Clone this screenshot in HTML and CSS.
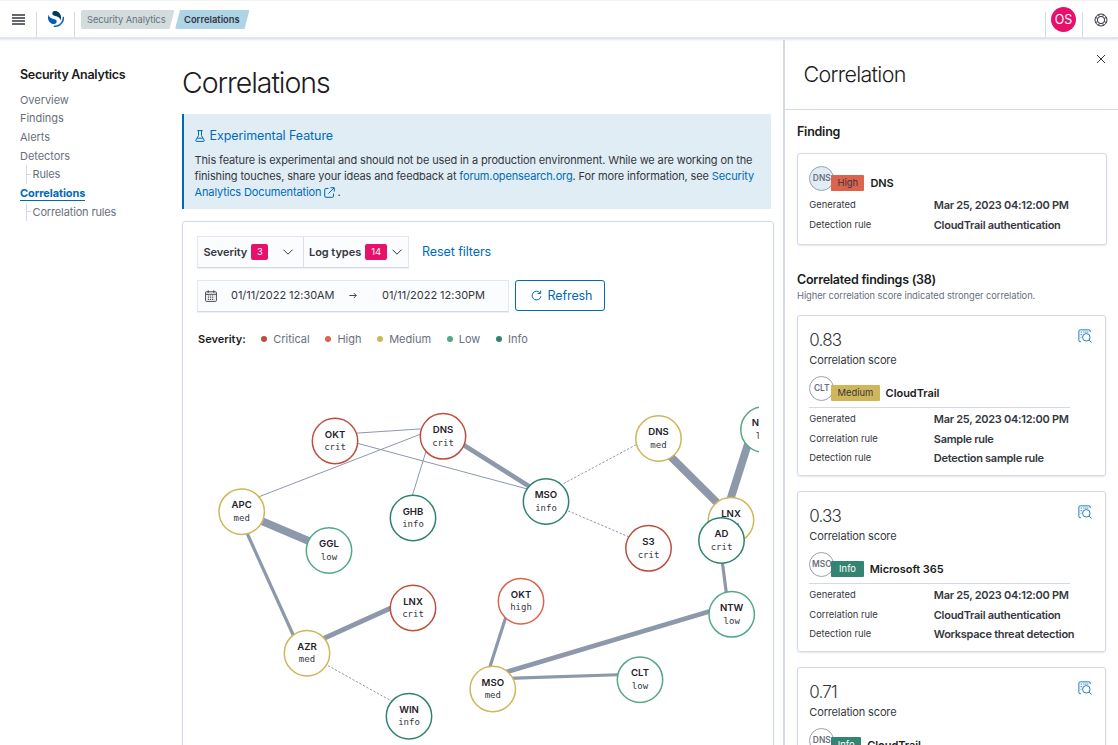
FILE: index.html
```html
<!DOCTYPE html>
<html lang="en">
<head>
<meta charset="utf-8">
<title>Correlations</title>
<link rel="stylesheet" href="styles.css">
</head>
<body>
<svg class="defs" aria-hidden="true">
  <symbol id="inspect" viewBox="0 0 16 16">
    <path d="M3.5 14.5h-1a1.5 1.5 0 0 1-1.5-1.500V2.500A1.500 1.500 0 0 1 2.500 1h10A1.500 1.500 0 0 1 14 2.500v1" />
    <path d="M3 3.500h1.500M6 3.500h6M3 6.500h2.500M3 9.500h1" stroke-dasharray="1.500 .7" />
    <circle cx="9.500" cy="9.500" r="4.300" />
    <path d="M12.700 12.700l2.800 2.800" />
  </symbol>
  <symbol id="chevron" viewBox="0 0 12 12"><path d="M1.500 3.700L6 8.200l4.500-4.500" /></symbol>
</svg>

<header class="topbar">
  <div class="menu"><svg width="13" height="11" viewBox="0 0 13 11"><path d="M0 1h13M0 4h13M0 7h13M0 10h13" /></svg></div>
  <div class="logo">
    <svg width="16" height="16" viewBox="0 0 64 64">
      <path fill="#005eb8" d="M61.700 23.500a2.300 2.300 0 0 0-2.300 2.300c0 18.600-15 33.600-33.600 33.600a2.300 2.300 0 1 0 0 4.600C46.900 64 64 46.900 64 25.800a2.300 2.300 0 0 0-2.300-2.300z" stroke="#005eb8" stroke-width="2" />
      <path fill="#003b5c" d="M48.100 38c2.200-3.600 4.300-8.400 3.900-15.100C51.100 9 38.500-1.500 26.600-.3 21.900.1 17.100 3.900 17.500 10.700c.2 3 1.600 4.700 4 6.100 2.200 1.300 5.100 2.100 8.400 3 4 1.100 8.600 2.400 12.100 5C46.200 27.900 49.100 31.500 48.100 38z" />
      <path fill="#005eb8" d="M3.900 14C1.700 17.600-.4 22.400 0 29.100.9 43 13.500 53.500 25.400 52.300c4.700-.4 9.500-4.200 9.100-11-.2-3-1.600-4.700-4-6.100-2.200-1.300-5.100-2.100-8.400-3-4-1.100-8.600-2.400-12.100-5C5.800 24.100 2.900 20.500 3.900 14z" />
    </svg>
  </div>
  <nav class="crumbs"><a class="crumb">Security Analytics</a><a class="crumb crumb-on">Correlations</a></nav>
  <div class="account"><span class="avatar">OS</span></div>
  <div class="help">
    <svg width="14" height="14" viewBox="0 0 14 14"><circle cx="7" cy="7" r="6" /><circle cx="7" cy="7" r="3.600" /><path d="M4.500 1.500l.8 2.200M9.500 1.500l-.8 2.200M4.500 12.500l.8-2.200M9.500 12.500l-.8-2.200M1.500 4.500l2.200.8M12.500 4.500l-2.200.8M1.500 9.500l2.200-.8M12.500 9.500l-2.200-.8" /></svg>
  </div>
</header>

<div class="layout">
  <nav class="sidenav">
    <h2>Security Analytics</h2>
    <a>Overview</a>
    <a>Findings</a>
    <a>Alerts</a>
    <a>Detectors</a>
    <a class="child">Rules</a>
    <a class="on"><span>Correlations</span></a>
    <a class="child">Correlation rules</a>
  </nav>

  <main class="main">
    <h1>Correlations</h1>
    <section class="callout">
      <h3><svg width="10" height="12" viewBox="0 0 10 12"><path d="M2.300.6h5.400M3.500.6v5L.9 10.100q-.5 1.300.8 1.300h6.600q1.300 0 .8-1.300L6.500 5.600v-5M2.200 8.200h5.600" /></svg>Experimental Feature</h3>
      <p>This feature is experimental and should not be used in a production environment. While we are working on the<br>finishing touches, share your ideas and feedback at <a>forum.opensearch.org</a>. For more information, see <a>Security<br>Analytics Documentation</a><svg class="ext" width="11" height="11" viewBox="0 0 11 11"><path d="M4.500 1.500H2Q.7 1.500.7 2.800v6.200q0 1.300 1.300 1.300h6.200q1.300 0 1.300-1.300V6.500M6.500.7h3.800v3.800M10 1L4.500 6.500" /></svg>.</p>
    </section>

    <section class="panel">
      <div class="filters">
        <div class="group">
          <button class="filter">Severity<span class="count">3</span><svg width="12" height="12"><use href="#chevron" /></svg></button>
          <button class="filter">Log types<span class="count wide">14</span><svg width="12" height="12"><use href="#chevron" /></svg></button>
        </div>
        <a class="reset">Reset filters</a>
      </div>
      <div class="dates">
        <div class="range">
          <svg width="12" height="12" viewBox="0 0 12 12"><path d="M1.500 1.800h9q.9 0 .9.900v7.800q0 .9-.9.900h-9q-.9 0-.9-.9V2.700q0-.9.900-.9zM.6 4.300h10.800M3.200.3v2.600M8.800.3v2.600" /><path stroke-dasharray="1.300 .8" d="M2.800 6h6.500M2.800 7.800h6.500M2.800 9.500h6.500" /></svg>
          <span class="from">01/11/2022 12:30AM</span>
          <svg class="arrow" width="8" height="7" viewBox="0 0 8 7"><path d="M.3 3.500h7M4.800 1l2.500 2.500L4.800 6" /></svg>
          <span class="to">01/11/2022 12:30PM</span>
        </div>
        <button class="refresh"><svg width="11" height="11" viewBox="0 0 11 11"><path d="M8.900 2.700A4.400 4.400 0 1 0 9.900 6.200M9.700 .5v3H6.700" /></svg>Refresh</button>
      </div>
      <div class="legend"><b>Severity:</b><span class="crit">Critical</span><span class="high">High</span><span class="med">Medium</span><span class="low">Low</span><span class="info">Info</span></div>
      <svg class="graph" width="561" height="385" viewBox="198 360 561 385">
        <g class="edges">
          <path d="M335 434.500L443 427.500M335 437.300L546 494M241.500 503.500L443 425.500M431 435L412.500 495" />
          <path stroke-width="4.700" d="M443 432L546 497" />
          <path stroke-width="7.800" d="M241.500 512.300L329 549.700" />
          <path stroke-width="3.200" d="M241.500 521L305 661" />
          <path stroke-width="4.700" d="M307 646L413 598" />
          <path stroke-width="3.200" d="M511 601L486 679M493 678.800L640 674M719.500 540L729 614" />
          <path stroke-width="4.700" d="M493 676L731 605" />
          <path stroke-width="7.800" d="M658 444L731 516.500M754 425L727 510" />
          <path class="dash" d="M546 493L658 433M546 501.500L648 545M307 654L413 713" />
        </g>
        <g class="node crit"><circle cx="335" cy="441" r="22.700" /><text x="335" y="437.700">OKT</text><text class="lvl" x="335" y="450.200">crit</text></g>
        <g class="node crit"><circle cx="443" cy="436.300" r="22.700" /><text x="443" y="433">DNS</text><text class="lvl" x="443" y="445.500">crit</text></g>
        <g class="node med"><circle cx="241.700" cy="511.700" r="22.700" /><text x="241.700" y="508.400">APC</text><text class="lvl" x="241.700" y="520.900">med</text></g>
        <g class="node low"><circle cx="329" cy="550.500" r="22.700" /><text x="329" y="547.200">GGL</text><text class="lvl" x="329" y="559.700">low</text></g>
        <g class="node info"><circle cx="413" cy="518" r="22.700" /><text x="413" y="514.700">GHB</text><text class="lvl" x="413" y="527.200">info</text></g>
        <g class="node info"><circle cx="546" cy="501.500" r="22.700" /><text x="546" y="498.200">MSO</text><text class="lvl" x="546" y="510.700">info</text></g>
        <g class="node med"><circle cx="658.500" cy="438.500" r="22.700" /><text x="658.500" y="435.200">DNS</text><text class="lvl" x="658.500" y="447.700">med</text></g>
        <g class="node crit"><circle cx="648.500" cy="548.300" r="22.700" /><text x="648.500" y="545">S3</text><text class="lvl" x="648.500" y="557.500">crit</text></g>
        <g class="node low"><circle cx="763.500" cy="429.500" r="22.700" /><text x="763.500" y="426.200">NTW</text><text class="lvl" x="764" y="438.700">low</text></g>
        <g class="node med"><circle cx="731" cy="520.300" r="22.700" /><text x="731" y="517">LNX</text><text class="lvl" x="731" y="529.500">med</text></g>
        <g class="node info"><circle cx="721.500" cy="540.500" r="22.700" /><text x="721.500" y="537.200">AD</text><text class="lvl" x="721.500" y="549.700">crit</text></g>
        <g class="node crit"><circle cx="413" cy="608" r="22.700" /><text x="413" y="604.700">LNX</text><text class="lvl" x="413" y="617.200">crit</text></g>
        <g class="node med"><circle cx="307" cy="653.200" r="22.700" /><text x="307" y="649.900">AZR</text><text class="lvl" x="307" y="662.400">med</text></g>
        <g class="node info"><circle cx="409" cy="716.200" r="22.700" /><text x="409" y="712.900">WIN</text><text class="lvl" x="409" y="725.400">info</text></g>
        <g class="node high"><circle cx="521" cy="601.200" r="22.700" /><text x="521" y="597.900">OKT</text><text class="lvl" x="521" y="610.400">high</text></g>
        <g class="node med"><circle cx="492.800" cy="689" r="22.700" /><text x="492.800" y="685.700">MSO</text><text class="lvl" x="492.800" y="698.200">med</text></g>
        <g class="node low"><circle cx="640" cy="679.700" r="22.700" /><text x="640" y="676.400">CLT</text><text class="lvl" x="640" y="688.900">low</text></g>
        <g class="node low"><circle cx="731.700" cy="614.300" r="22.700" /><text x="731.700" y="611">NTW</text><text class="lvl" x="731.700" y="623.500">low</text></g>
      </svg>
    </section>
  </main>

  <aside class="flyout">
    <div class="flyhead"><h2>Correlation</h2><svg width="10" height="10" viewBox="0 0 10 10"><path d="M1 1l8 8M9 1L1 9" /></svg></div>
    <div class="flybody">
      <h3>Finding</h3>
      <article class="card finding">
        <div class="who"><span class="disc shaded">DNS</span><span class="badge b-high">High</span><strong>DNS</strong></div>
        <dl><dt>Generated</dt><dd>Mar 25, 2023 04:12:00 PM</dd><dt>Detection rule</dt><dd>CloudTrail authentication</dd></dl>
      </article>
      <h3 class="second">Correlated findings (38)</h3>
      <p class="hint">Higher correlation score indicated stronger correlation.</p>
      <article class="card scored">
        <svg class="inspect" width="14" height="14"><use href="#inspect" /></svg>
        <div class="score">0.83</div><div class="scorelabel">Correlation score</div>
        <div class="who"><span class="disc">CLT</span><span class="badge b-med">Medium</span><strong>CloudTrail</strong></div>
        <dl><dt>Generated</dt><dd>Mar 25, 2023 04:12:00 PM</dd><dt>Correlation rule</dt><dd>Sample rule</dd><dt>Detection rule</dt><dd>Detection sample rule</dd></dl>
      </article>
      <article class="card scored">
        <svg class="inspect" width="14" height="14"><use href="#inspect" /></svg>
        <div class="score">0.33</div><div class="scorelabel">Correlation score</div>
        <div class="who"><span class="disc">MSO</span><span class="badge b-info">Info</span><strong>Microsoft 365</strong></div>
        <dl><dt>Generated</dt><dd>Mar 25, 2023 04:12:00 PM</dd><dt>Correlation rule</dt><dd>CloudTrail authentication</dd><dt>Detection rule</dt><dd>Workspace threat detection</dd></dl>
      </article>
      <article class="card scored">
        <svg class="inspect" width="14" height="14"><use href="#inspect" /></svg>
        <div class="score">0.71</div><div class="scorelabel">Correlation score</div>
        <div class="who"><span class="disc">DNS</span><span class="badge b-info tight">Info</span><strong>CloudTrail</strong></div>
      </article>
    </div>
  </aside>
</div>
</body>
</html>
```
FILE: styles.css
```css
* { box-sizing: border-box; }
body { margin: 0; height: 745px; overflow: hidden; background: #fff; color: #343741; font: 11px/16.3px Inter, "Liberation Sans", sans-serif; }
h1, h2, h3, p, dl, dd { margin: 0; }
svg { fill: none; stroke: currentColor; flex: none; }
button { font: inherit; color: inherit; margin: 0; }
.defs { position: absolute; width: 0; height: 0; }

.topbar { height: 39px; display: flex; align-items: stretch; border-top: 1px solid #f3f3f3; border-bottom: 2px solid #dfe4ed; box-shadow: 0 1px 2px #98a2b344; }
.menu { width: 36px; padding: 13px 0 0 12px; color: #343741; }
.menu svg { display: block; stroke-width: 1.500; }
.logo { width: 39px; margin-top: 11px; border-left: 1px solid #d3dae6; border-right: 1px solid #d3dae6; padding: 0 0 0 11px; }
.logo svg { display: block; stroke: none; margin-top: -1px; }
.crumbs { flex: 1; display: flex; gap: 1px; padding: 9px 0 0 6px; }
.crumb { height: 19px; line-height: 19px; font-size: 9.400px; letter-spacing: -.09px; color: #69707d; background: #d2dcdc; padding: 0 8px 0 6px; width: 93.500px; clip-path: polygon(0 0, 100% 0, calc(100% - 5px) 100%, 0 100%); border-radius: 2px; }
.crumb-on { background: #aed4e6; color: #343741; font-weight: 600; letter-spacing: 0; width: 74.500px; margin-left: -.5px; padding-left: 9px; clip-path: polygon(5px 0, 100% 0, calc(100% - 5px) 100%, 0 100%); }
.account { width: 38px; margin-top: 11px; border-left: 1px solid #d3dae6; border-right: 1px solid #d3dae6; }
.avatar { display: block; width: 25px; height: 25px; margin: -5px 0 0 5px; border-radius: 50%; background: #e7116b; color: #fff; font-size: 12.500px; line-height: 25px; text-align: center; }
.help { width: 35px; padding: 12px 0 0 11px; }
.help svg { display: block; stroke-width: 1; }

.layout { display: flex; height: 706px; overflow: hidden; }
.sidenav { width: 182px; padding: 28px 0 0 20px; color: #69707d; }
.sidenav h2 { font-size: 12.500px; line-height: 16px; font-weight: 600; letter-spacing: -.3px; color: #1a1c21; margin-bottom: 7.500px; }
.sidenav a { display: block; height: 18.700px; line-height: 18.700px; letter-spacing: -.05px; }
.sidenav .on { color: #006bb4; font-weight: 700; letter-spacing: -.08px; }
.on span { display: inline-block; line-height: 13px; border-bottom: 1px solid #006bb4; }
.sidenav .child { margin-left: 6px; padding-left: 5.500px; letter-spacing: -.14px; border-left: 1px solid #d3dae6; background: linear-gradient(#d3dae6, #d3dae6) 0 50% / 4px 1px no-repeat; }

.main { width: 592px; padding-top: 26px; }
h1 { font-size: 28.500px; line-height: 36px; font-weight: 300; letter-spacing: -1.050px; color: #1a1c21; }
.callout { width: 589px; height: 95px; margin-top: 12.500px; border-left: 2px solid #006bb4; background: #e0edf5; padding: 14px 0 0 10.500px; }
.callout h3 { display: flex; align-items: center; gap: 5px; color: #006bb4; font-size: 12.500px; font-weight: 400; letter-spacing: -.08px; line-height: 16px; margin-bottom: 8px; }
.callout p { white-space: nowrap; letter-spacing: -.127px; }
.callout a, .ext { color: #006bb4; }
.ext { margin: 0 2px 0 3px; vertical-align: -2px; }
.panel { width: 592px; height: 540px; margin-top: 12px; border: 1px solid #d3dae6; border-radius: 3px; box-shadow: 0 1px 2px #98a2b333; padding: 14px 14px 0; }
.filters, .dates { display: flex; align-items: center; }
.group { display: flex; border: 1px solid #e3e7f0; border-bottom-color: #d3dae6; box-shadow: 0 1px 1px #98a2b326; background: #fbfcfd; }
.filter { width: 105px; height: 30.500px; display: flex; align-items: center; border: 0; padding: 0 9px 0 5.500px; background: none; font-weight: 600; letter-spacing: -.05px; }
.filter + .filter { border-left: 1px solid #d8dfea; padding: 0 5px; }
.filter svg { margin-left: auto; }
.count { width: 17px; height: 15.500px; line-height: 15.500px; margin-left: 4px; border-radius: 2px; background: #e7116b; color: #fff; font-size: 9.400px; font-weight: 400; text-align: center; }
.count.wide { width: 22px; }
.reset { margin: 1px 0 0 13px; color: #006bb4; font-size: 12.500px; letter-spacing: -.08px; }
.dates { margin-top: 11.500px; gap: 6px; }
.range { width: 312px; height: 32px; display: flex; align-items: center; border: 1px solid #e3e7f0; border-bottom: 1.500px solid #d3dae6; box-shadow: 0 1px 1px #98a2b326; background: #fbfcfd; padding-left: 7px; }
.range svg { stroke-width: .9; }
.from { width: 118px; margin-left: 14px; letter-spacing: -.03px; }
.to { margin-left: 25px; letter-spacing: -.03px; }
.refresh { width: 90px; height: 31px; display: flex; align-items: center; justify-content: center; gap: 6px; border: 1px solid #006bb4; border-radius: 3px; background: #fff; color: #006bb4; font-size: 12.500px; letter-spacing: -.1px; padding: 1px 0 0 3px; }
.refresh svg { margin-top: -1px; }
.legend { display: flex; align-items: center; margin: 19px 0 13px 1px; color: #69707d; height: 16px; line-height: 16px; }
.legend b { color: #1a1c21; font-weight: 600; margin-right: 15.500px; }
.legend span { display: flex; align-items: center; margin-right: 15.700px; }
.legend span::before { content: ""; width: 6px; height: 6px; border-radius: 50%; background: var(--sev); margin-right: 6px; }
.crit { --sev: #bd4e3e; }
.high { --sev: #dc634c; }
.med { --sev: #d0b65a; }
.low { --sev: #55a886; }
.info { --sev: #2f8270; }
.graph { display: block; overflow: hidden; margin-left: 1px; }
.edges { stroke: #8d98ab; stroke-width: 1; }
.dash { stroke-dasharray: 2.300 1.700; }
.node circle { fill: #fff; stroke: var(--sev); stroke-width: 1.500; }
.node text { fill: #1f222b; stroke: none; font-size: 9.600px; font-weight: 600; text-anchor: middle; }
.node .lvl { font-family: "DejaVu Sans Mono", monospace; font-size: 9px; font-weight: 400; fill: #343741; }

.flyout { width: 335px; margin: 1px 0 0 9px; border-left: 2px solid #d3dae6; }
.flyhead { height: 70px; border-bottom: 1px solid #d3dae6; display: flex; justify-content: space-between; padding: 14px 12px 0 18.500px; }
.flyhead h2 { font-size: 21.500px; line-height: 40px; font-weight: 300; color: #1a1c21; letter-spacing: -.7px; }
.flyhead svg { width: 10px; }
.flybody { padding: 14px 0 0 12px; }
.flybody h3 { color: #1a1c21; font-size: 12.500px; line-height: 16px; font-weight: 600; letter-spacing: -.24px; }
.card { position: relative; width: 309px; border: 1px solid #d3dae6; border-radius: 3px; box-shadow: 0 1px 2px #98a2b344; padding: 0 11.300px; }
.finding { width: 310px; height: 92px; margin-top: 13px; padding-top: 11.500px; }
.second { margin-top: 26.500px; }
.hint { font-size: 9.400px; line-height: 16px; color: #69707d; letter-spacing: -.09px; }
.scored { height: 161px; padding-top: 14px; margin-bottom: 15px; }
.hint + .scored { margin-top: 11px; }
.score { font-size: 17px; line-height: 20px; font-weight: 300; letter-spacing: -.8px; }
.scorelabel { line-height: 16px; margin-top: 2px; letter-spacing: -.15px; }
.who { display: flex; align-items: flex-end; }
.scored .who { width: 261px; margin-top: 8px; padding-bottom: 6px; border-bottom: 1px solid #d3dae6; }
.disc { width: 25px; height: 25px; line-height: 23px; border: 1px solid #98a2b3; border-radius: 50%; font-size: 8.400px; font-weight: 600; text-align: center; color: #69707d; display: flex; justify-content: center; }
.shaded { background: #e0edf5; }
.badge { position: relative; height: 16px; line-height: 16px; padding: 0 6.300px; margin: 0 6px 0 -3px; border-radius: 1px; font-size: 9.400px; }
.b-high { background: #dc634c; }
.b-med { background: #d0b65a; }
.b-info { background: #348474; color: #fff; padding: 0 7.800px; }
.tight { padding: 0 6.500px; }
.who strong { font-weight: 600; color: #1a1c21; line-height: 15px; letter-spacing: -.05px; }
dl { display: grid; grid-template-columns: 124.500px auto; grid-auto-rows: 19.500px; align-items: center; margin-top: 5px; }
.scored dl { margin-top: 2px; }
dt { font-size: 9.400px; }
dd { font-weight: 600; white-space: nowrap; letter-spacing: -.28px; }
.inspect { position: absolute; top: 13.500px; right: 13px; color: #006bb4; }
```
